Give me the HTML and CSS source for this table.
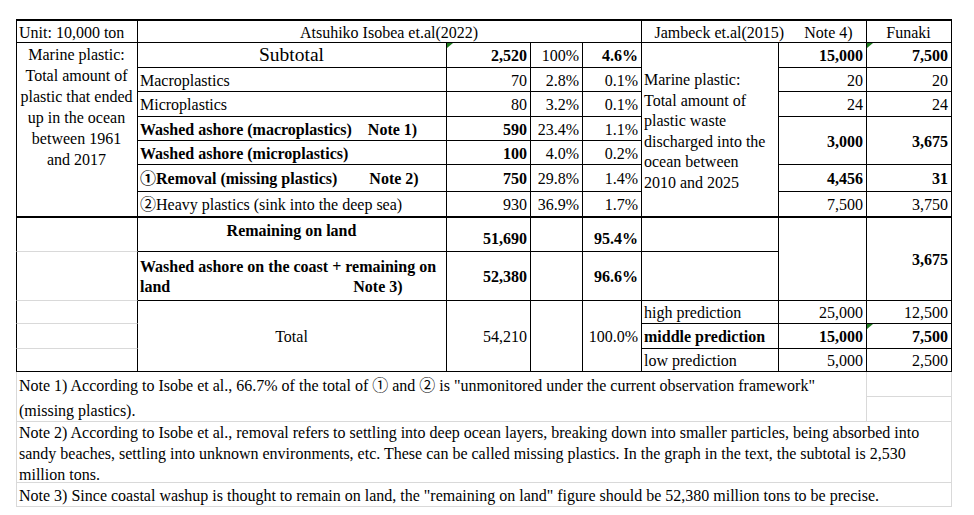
FILE: index.html
```html
<!DOCTYPE html>
<html lang="en">
<head>
<meta charset="utf-8">
<title>Marine plastic table</title>
<link rel="stylesheet" href="styles.css">
</head>
<body>
<div class="sheet">
  <!-- header -->
  <div class="cell top first">Unit: 10,000 ton</div>
  <div class="cell top cs4 ctr">Atsuhiko Isobea et.al(2022)</div>
  <div class="cell top cs2 ctr pre">Jambeck et.al(2015)     Note 4)</div>
  <div class="cell top ctr">Funaki</div>

  <!-- subtotal -->
  <div class="cell first rs7 desc thick">Marine plastic:<br>Total amount of<br>plastic that ended<br>up in the ocean<br>between 1961<br>and 2017</div>
  <div class="cell ctr subtotal">Subtotal</div>
  <div class="cell num b flag">2,520</div>
  <div class="cell num">100%</div>
  <div class="cell num b">4.6%</div>
  <div class="cell rs7 jam thick">Marine plastic:<br>Total amount of<br>plastic waste<br>discharged into the<br>ocean between<br>2010 and 2025</div>
  <div class="cell num b">15,000</div>
  <div class="cell num b flag">7,500</div>

  <!-- macro -->
  <div class="cell">Macroplastics</div>
  <div class="cell num">70</div>
  <div class="cell num">2.8%</div>
  <div class="cell num">0.1%</div>
  <div class="cell num">20</div>
  <div class="cell num">20</div>

  <!-- micro -->
  <div class="cell">Microplastics</div>
  <div class="cell num">80</div>
  <div class="cell num">3.2%</div>
  <div class="cell num">0.1%</div>
  <div class="cell num">24</div>
  <div class="cell num">24</div>

  <!-- washed macro -->
  <div class="cell b pre">Washed ashore (macroplastics)    Note 1)</div>
  <div class="cell num b">590</div>
  <div class="cell num">23.4%</div>
  <div class="cell num">1.1%</div>
  <div class="cell num b rs2">3,000</div>
  <div class="cell num b rs2">3,675</div>

  <!-- washed micro -->
  <div class="cell b">Washed ashore (microplastics)</div>
  <div class="cell num b">100</div>
  <div class="cell num">4.0%</div>
  <div class="cell num">0.2%</div>

  <!-- removal -->
  <div class="cell b pre">①Removal (missing plastics)        Note 2)</div>
  <div class="cell num b">750</div>
  <div class="cell num">29.8%</div>
  <div class="cell num">1.4%</div>
  <div class="cell num b">4,456</div>
  <div class="cell num b">31</div>

  <!-- heavy -->
  <div class="cell thick">②Heavy plastics (sink into the deep sea)</div>
  <div class="cell num thick">930</div>
  <div class="cell num thick">36.9%</div>
  <div class="cell num thick">1.7%</div>
  <div class="cell num thick">7,500</div>
  <div class="cell num thick">3,750</div>

  <!-- remaining on land -->
  <div class="cell first gb"></div>
  <div class="cell ctr b attop">Remaining on land</div>
  <div class="cell num b low">51,690</div>
  <div class="cell"></div>
  <div class="cell num b low">95.4%</div>
  <div class="cell"></div>
  <div class="cell rs2"></div>
  <div class="cell num b rs2">3,675</div>

  <!-- washed coast + land -->
  <div class="cell first gb"></div>
  <div class="cell b"><span class="lbl">Washed ashore on the coast + remaining on<br>land<span class="ref3">Note 3)</span></span></div>
  <div class="cell num b">52,380</div>
  <div class="cell"></div>
  <div class="cell num b">96.6%</div>
  <div class="cell"></div>

  <!-- predictions / total -->
  <div class="cell first gb"></div>
  <div class="cell rs3 ctr">Total</div>
  <div class="cell rs3 num">54,210</div>
  <div class="cell rs3"></div>
  <div class="cell rs3 num">100.0%</div>
  <div class="cell">high prediction</div>
  <div class="cell num">25,000</div>
  <div class="cell num">12,500</div>

  <div class="cell first gb"></div>
  <div class="cell b">middle prediction</div>
  <div class="cell num b">15,000</div>
  <div class="cell num b flag">7,500</div>

  <div class="cell first"></div>
  <div class="cell">low prediction</div>
  <div class="cell num">5,000</div>
  <div class="cell num">2,500</div>

  <!-- notes -->
  <div class="cell note nl note1 cs7 rs2">Note 1) According to Isobe et al., 66.7% of the total of ① and ② is "unmonitored under the current observation framework"<br>(missing plastics).</div>
  <div class="cell note"></div>
  <div class="cell note"></div>
  <div class="cell note nl note2 cs8">Note 2) According to Isobe et al., removal refers to settling into deep ocean layers, breaking down into smaller particles, being absorbed into<br>sandy beaches, settling into unknown environments, etc. These can be called missing plastics. In the graph in the text, the subtotal is 2,530<br>million  tons.</div>
  <div class="cell note nl cs8">Note 3) Since coastal washup is thought to remain on land, the "remaining on land" figure should be 52,380 million tons to be precise.</div>
</div>
</body>
</html>
```

FILE: styles.css
```css
* { box-sizing: border-box; }
html, body { margin: 0; background: #fff; }
body {
  padding: 19px 0 0 16px;
  font-family: "Liberation Serif", "Noto Sans CJK JP", serif;
  font-size: 16px;
  color: #000;
}
.sheet {
  display: grid;
  grid-template-columns: 122px 309px 84px 52px 59px 137px 88px 85px;
  grid-template-rows: 24px 25px 24px 25px 24px 24px 27px 26px 34px 49px 23px 25px 23px 25px 25px 61px 24px;
  width: 936px;
}
.cell {
  border-right: 1px solid #000;
  border-bottom: 1px solid #000;
  display: flex;
  align-items: center;
  justify-content: flex-start;
  padding: 2px 3px 0 2px;
  line-height: 20px;
  white-space: nowrap;
  position: relative;
}
.top { border-top: 2px solid #000; }
.first { border-left: 1px solid #000; }
.thick { border-bottom-width: 2px; }
.gb { border-bottom-color: #d9d9d9; }
.num { justify-content: flex-end; }
.ctr { justify-content: center; text-align: center; }
.b { font-weight: bold; }
.pre { white-space: pre; }
.cs2 { grid-column: span 2; }
.cs4 { grid-column: span 4; }
.cs7 { grid-column: span 7; }
.cs8 { grid-column: span 8; }
.rs2 { grid-row: span 2; }
.rs3 { grid-row: span 3; }
.rs7 { grid-row: span 7; }
.subtotal { font-size: 19.5px; padding-top: 0; }
.desc {
  align-items: flex-start;
  justify-content: center;
  text-align: center;
  line-height: 21px;
  padding-top: 1px;
}
.jam { line-height: 20.5px; padding-top: 4px; }
.attop { align-items: flex-start; padding-top: 3px; }
.low { padding-top: 8px; }
.lbl { display: block; }
.ref3 { margin-left: 183px; }
.flag::before {
  content: "";
  position: absolute;
  left: 0;
  top: 0;
  border-top: 5px solid #1f7a1f;
  border-right: 6px solid transparent;
}
.note {
  border-right-color: #d9d9d9;
  border-bottom-color: #d9d9d9;
}
.nl { border-left: 1px solid #d9d9d9; }
.note1 { align-items: flex-start; line-height: 25px; padding-top: 1px; }
.note2 { align-items: flex-start; line-height: 21px; padding-top: 0; }
```
